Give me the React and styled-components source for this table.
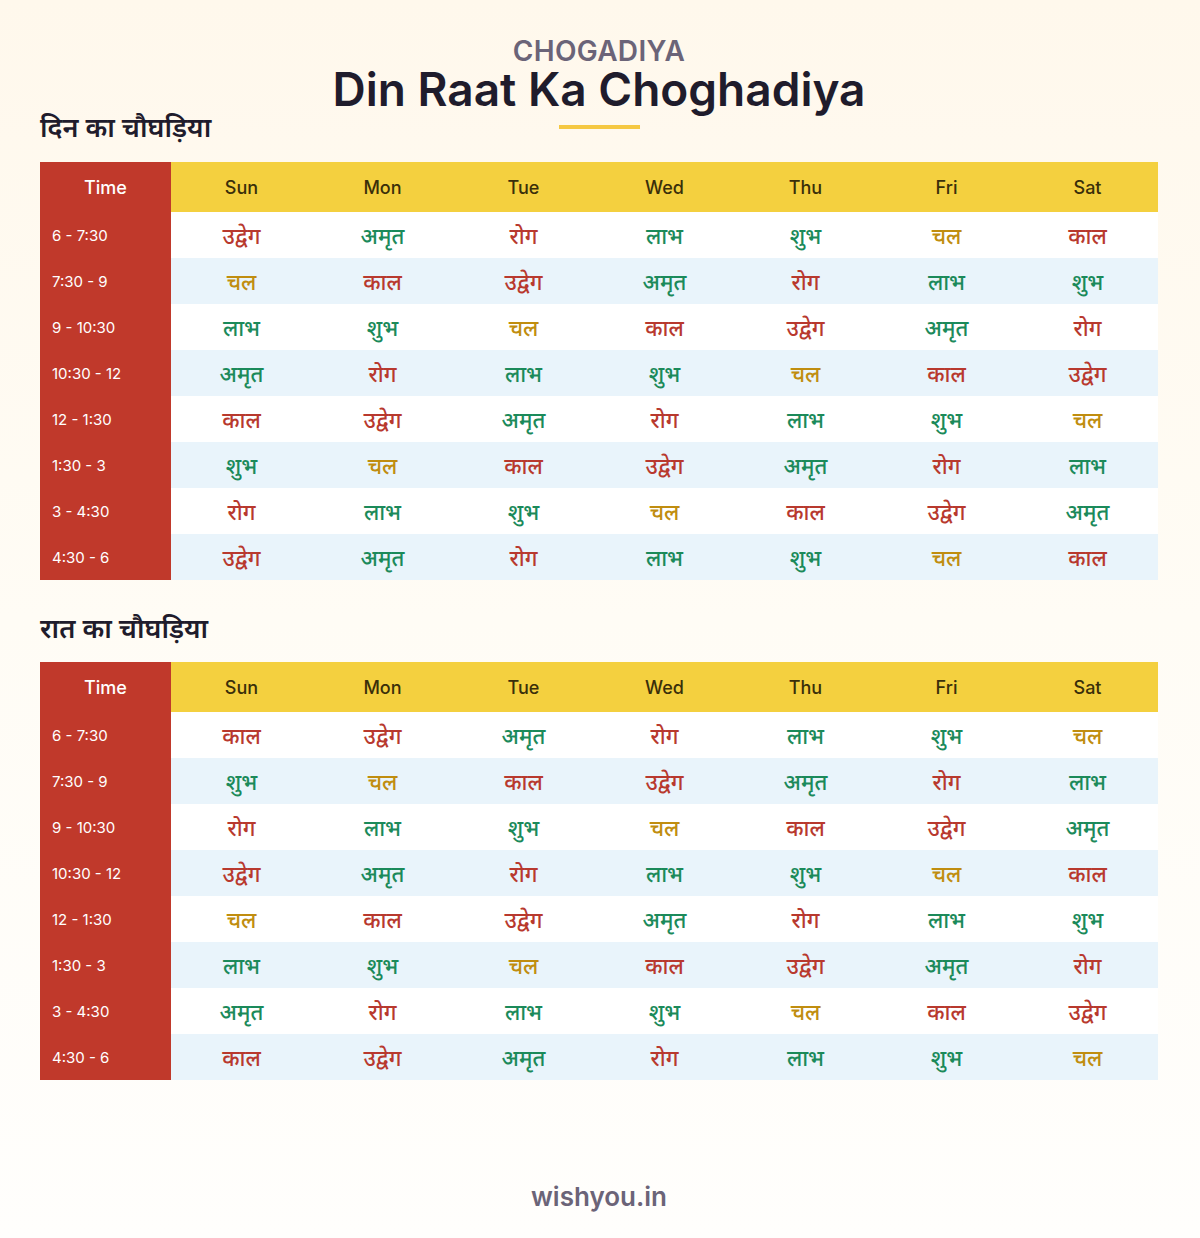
import React from "react";
import styled, { createGlobalStyle } from "styled-components";

const GlobalStyle = createGlobalStyle`
  html, body {
    margin: 0;
    padding: 0;
  }
  body {
    font-family: "Inter", "Noto Sans", "Noto Sans Devanagari", "Lohit Devanagari", sans-serif;
    background: #fffdf8;
  }
`;

const Page = styled.div`
  min-height: 1238px;
  box-sizing: border-box;
  padding: 36px 42px 0 40px;
  background: linear-gradient(180deg, #fff8ec 0%, #fffcf5 50%, #fffefc 100%);
  display: flex;
  flex-direction: column;
`;

const Kicker = styled.div`
  text-align: center;
  font-size: 28px;
  line-height: 30px;
  font-weight: 600;
  color: #6b6478;
  letter-spacing: 0.3px;
`;

const MainTitle = styled.h1`
  margin: 0;
  text-align: center;
  font-size: 46px;
  line-height: 46px;
  font-weight: 600;
  color: #1f1c2c;
`;

const TitleRow = styled.div`
  display: grid;
  grid-template-columns: 1fr auto 1fr;
  align-items: center;
`;

const Underline = styled.span`
  display: block;
  width: 81px;
  height: 4px;
  background: #f5c842;
`;

const SectionTitle = styled.h2`
  margin: ${(p) => p.$top || 0}px 0 0;
  font-size: 27px;
  line-height: 30px;
  font-weight: 600;
  color: #1f1c2c;
  font-family: "Noto Sans", "Noto Sans Devanagari", "Lohit Devanagari", sans-serif;
`;

const Table = styled.div`
  display: grid;
  grid-template-columns: 131px repeat(7, 1fr);
  margin-top: ${(p) => p.$top}px;
`;

const HeadCell = styled.div`
  height: 50px;
  display: flex;
  align-items: center;
  justify-content: center;
  font-size: 18px;
  font-weight: 500;
  background: ${(p) => (p.$time ? "#c0392b" : "#f4d03f")};
  color: ${(p) => (p.$time ? "#ffffff" : "#3a2f0a")};
`;

const TimeCell = styled.div`
  height: 46px;
  display: flex;
  align-items: center;
  padding-left: 12px;
  background: #c0392b;
  color: #ffffff;
  font-size: 15px;
`;

const colors = {
  "उद्वेग": "#b8392e",
  "काल": "#b8392e",
  "रोग": "#b8392e",
  "अमृत": "#1b8a5a",
  "लाभ": "#1b8a5a",
  "शुभ": "#1b8a5a",
  "चल": "#c08d0f",
};

const Cell = styled.div`
  height: 46px;
  display: flex;
  align-items: center;
  justify-content: center;
  background: ${(p) => (p.$alt ? "#e9f4fb" : "#ffffff")};
  color: ${(p) => p.$color};
  font-size: 22px;
  font-weight: 500;
  font-family: "Noto Sans", "Noto Sans Devanagari", "Lohit Devanagari", sans-serif;
`;

const Footer = styled.div`
  margin-top: auto;
  padding-bottom: 26px;
  text-align: center;
  font-size: 26px;
  font-weight: 600;
  color: #6b6478;
`;

const days = ["Sun", "Mon", "Tue", "Wed", "Thu", "Fri", "Sat"];
const times = ["6 - 7:30", "7:30 - 9", "9 - 10:30", "10:30 - 12", "12 - 1:30", "1:30 - 3", "3 - 4:30", "4:30 - 6"];

const seq = ["उद्वेग", "अमृत", "रोग", "लाभ", "शुभ", "चल", "काल"];
const dayStarts = [0, 5, 3, 1, 6, 4, 2, 0];
const nightStarts = [6, 4, 2, 0, 5, 3, 1, 6];

const buildRows = (starts) =>
  starts.map((s) => days.map((_, i) => seq[(s + i) % 7]));

const Chart = ({ rows, top }) => (
  <Table $top={top}>
    <HeadCell $time>Time</HeadCell>
    {days.map((d) => (
      <HeadCell key={d}>{d}</HeadCell>
    ))}
    {rows.map((row, r) => (
      <React.Fragment key={r}>
        <TimeCell>{times[r]}</TimeCell>
        {row.map((v, c) => (
          <Cell key={c} $alt={r % 2 === 1} $color={colors[v]}>
            {v}
          </Cell>
        ))}
      </React.Fragment>
    ))}
  </Table>
);

export default function App() {
  return (
    <Page>
      <GlobalStyle />
      <Kicker>CHOGADIYA</Kicker>
      <MainTitle>Din Raat Ka Choghadiya</MainTitle>
      <TitleRow>
        <SectionTitle>दिन का चौघड़िया</SectionTitle>
        <Underline />
        <span />
      </TitleRow>
      <Chart rows={buildRows(dayStarts)} top={20} />
      <SectionTitle $top={33}>रात का चौघड़िया</SectionTitle>
      <Chart rows={buildRows(nightStarts)} top={19} />
      <Footer>wishyou.in</Footer>
    </Page>
  );
}
